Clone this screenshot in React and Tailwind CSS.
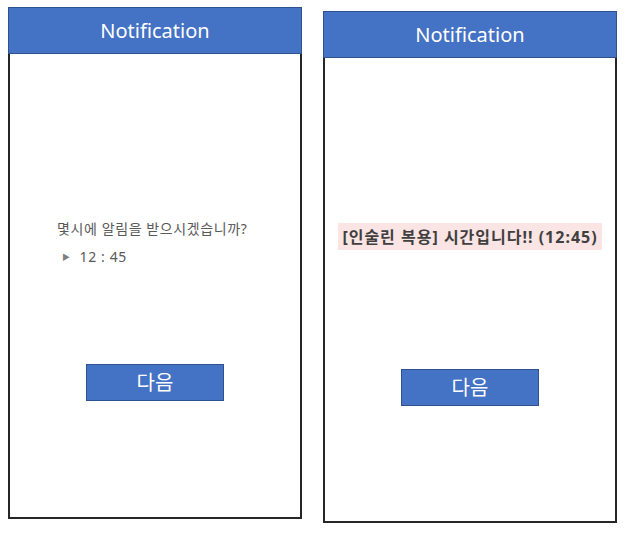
import React from 'react';

const font = { fontFamily: '"Noto Sans", "Noto Sans CJK KR", sans-serif' };

const Header = () => (
  <div className="h-[47px] bg-[#4472c4] border border-[#2f528f] flex items-center justify-center text-white text-[20px]">
    Notification
  </div>
);

const NextButton = () => (
  <button className="w-[138px] h-[37px] bg-[#4472c4] border border-[#2f528f] text-white text-[20px] flex items-center justify-center">
    다음
  </button>
);

export default function App() {
  return (
    <div className="w-[636px] h-[541px] bg-white flex items-start" style={font}>
      <div className="ml-[8px] mt-[7px] w-[294px] h-[512px] border-2 border-[#262626] flex flex-col">
        <div className="-mx-[2px] -mt-[2px]">
          <Header />
        </div>
        <div className="pl-[47px] pt-[165px] text-[14px] tracking-[0.6px] text-[#595959] leading-[20px]">
          <div>몇시에 알림을 받으시겠습니까?</div>
          <div className="mt-[8px] pl-[5px] flex items-center">
            <span className="text-[8px] text-[#7f7f7f]">▶</span>
            <span className="ml-[9px]">12 : 45</span>
          </div>
        </div>
        <div className="mt-[97px] pl-[76px]">
          <NextButton />
        </div>
      </div>

      <div className="ml-[21px] mt-[11px] w-[294px] h-[512px] border-2 border-[#262626] flex flex-col">
        <div className="-mx-[2px] -mt-[2px]">
          <Header />
        </div>
        <div className="pt-[165px] flex justify-center">
          <div className="h-[27px] px-[4px] bg-[#fbe4e4] text-[#404040] font-bold text-[16px] tracking-[1px] flex items-center">
            [인술린 복용] 시간입니다!! (12:45)
          </div>
        </div>
        <div className="mt-[119px] flex justify-center">
          <NextButton />
        </div>
      </div>
    </div>
  );
}
